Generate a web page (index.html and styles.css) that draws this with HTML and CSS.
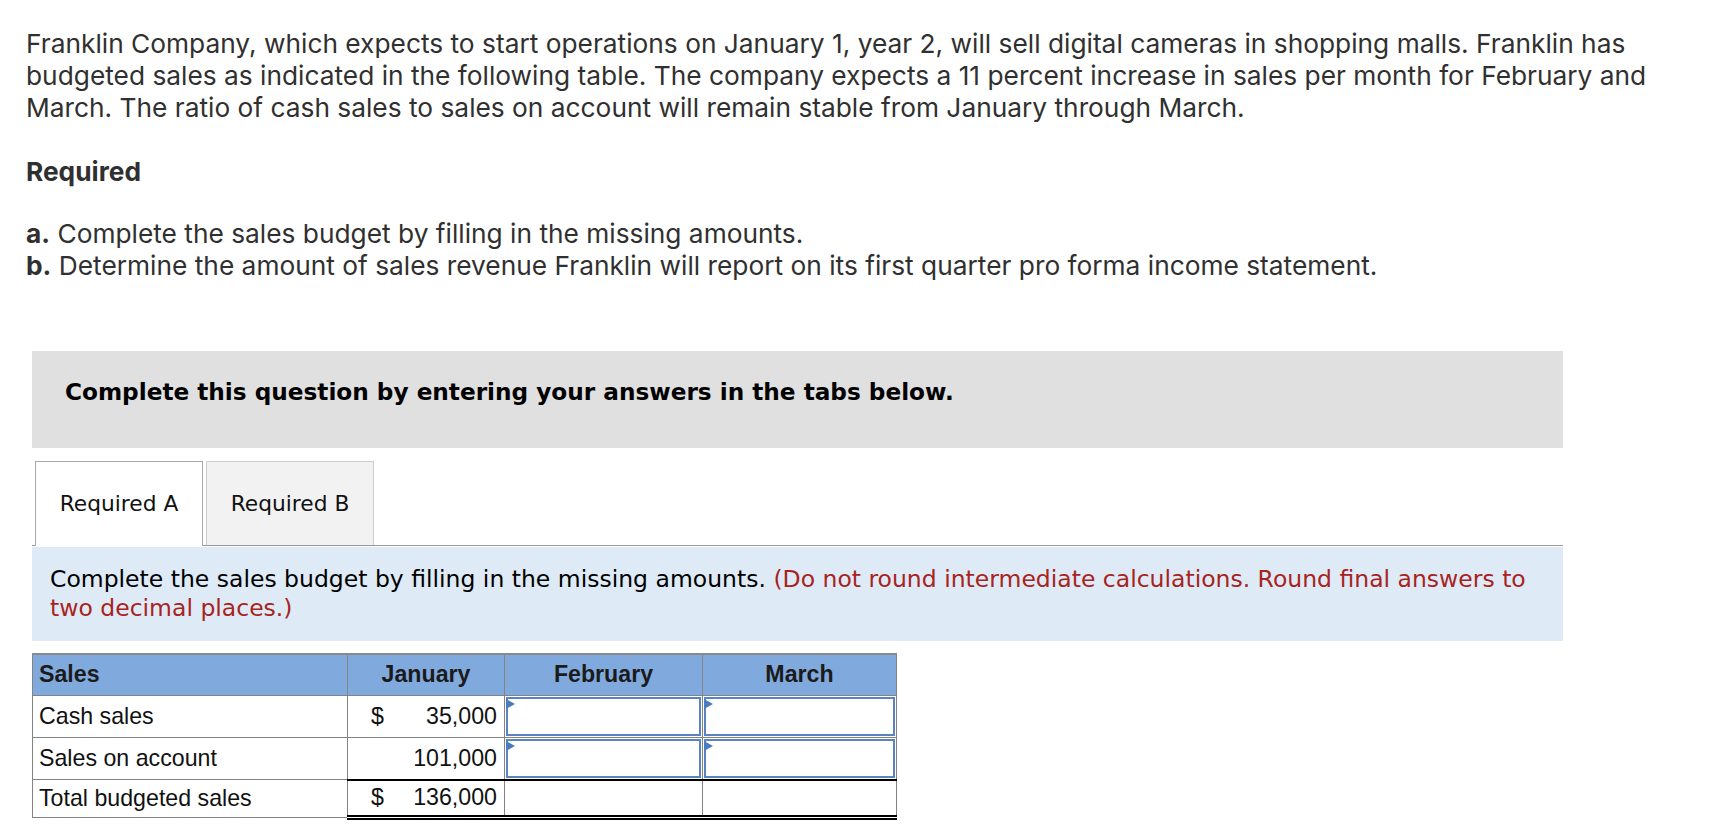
FILE: index.html
```html
<!DOCTYPE html>
<html lang="en">
<head>
<meta charset="utf-8">
<title>Franklin Company – Sales Budget</title>
<link rel="stylesheet" href="styles.css">
</head>
<body>
<div class="page">
  <p class="intro">Franklin Company, which expects to start operations on January 1, year 2, will sell digital cameras in shopping malls. Franklin has budgeted sales as indicated in the following table. The company expects a 11 percent increase in sales per month for February and March. The ratio of cash sales to sales on account will remain stable from January through March.</p>
  <p class="req-title">Required</p>
  <p class="req-list"><b>a.</b> Complete the sales budget by filling in the missing amounts.<br><b>b.</b> Determine the amount of sales revenue Franklin will report on its first quarter pro forma income statement.</p>

  <section class="question">
    <div class="banner">Complete this question by entering your answers in the tabs below.</div>
    <div class="tabs">
      <div class="tab tab-active">Required A</div>
      <div class="tab">Required B</div>
    </div>
    <div class="instructions"><span>Complete the sales budget by filling in the missing amounts.</span> <span class="warn">(Do not round intermediate calculations. Round final answers to two decimal places.)</span></div>

    <table class="budget">
      <colgroup>
        <col class="c-label"><col class="c-jan"><col class="c-feb"><col class="c-mar">
      </colgroup>
      <thead>
        <tr>
          <th class="h-label">Sales</th>
          <th>January</th>
          <th>February</th>
          <th>March</th>
        </tr>
      </thead>
      <tbody>
        <tr>
          <td class="label">Cash sales</td>
          <td class="amt"><span class="cur">$</span><span class="num">35,000</span></td>
          <td class="in"><div class="field"><span class="flag"></span></div></td>
          <td class="in"><div class="field"><span class="flag"></span></div></td>
        </tr>
        <tr>
          <td class="label">Sales on account</td>
          <td class="amt"><span class="cur"></span><span class="num">101,000</span></td>
          <td class="in"><div class="field"><span class="flag"></span></div></td>
          <td class="in"><div class="field"><span class="flag"></span></div></td>
        </tr>
        <tr class="total">
          <td class="label">Total budgeted sales</td>
          <td class="amt"><span class="cur">$</span><span class="num">136,000</span></td>
          <td></td>
          <td></td>
        </tr>
      </tbody>
    </table>
  </section>
</div>
</body>
</html>
```

FILE: styles.css
```css
html, body {
  margin: 0;
  padding: 0;
  background: #ffffff;
}

.page {
  padding: 28px 26px 20px 26px;
  width: 1728px;
  box-sizing: border-box;
}

.intro,
.req-title,
.req-list {
  font-family: "Inter", "Open Sans", sans-serif;
  font-size: 26.3px;
  line-height: 32px;
  color: #303030;
  margin: 0;
}

.req-title {
  font-weight: 700;
  margin-top: 32px;
}

.req-list {
  margin-top: 30px;
}

.req-list b {
  font-weight: 700;
}

.question {
  margin: 69px 0 0 6px;
  width: 1531px;
}

.banner {
  background: #e0e0e0;
  font-family: "DejaVu Sans", Verdana, sans-serif;
  font-weight: 700;
  font-size: 23.2px;
  color: #000;
  padding: 27px 20px 42px 33px;
  height: 97px;
  box-sizing: border-box;
}

.tabs {
  display: flex;
  align-items: flex-end;
  gap: 3px;
  margin-top: 13px;
  padding-left: 3px;
  height: 84px;
  border-bottom: 1px solid #9a9a9a;
}

.tab {
  width: 168px;
  height: 84px;
  box-sizing: border-box;
  display: flex;
  align-items: center;
  justify-content: center;
  padding-top: 0;
  font-family: "DejaVu Sans", Verdana, sans-serif;
  font-size: 21.75px;
  color: #111;
  background: #f2f2f2;
  border: 1px solid #cdcdcd;
  border-bottom: none;
}

.tab-active {
  background: #ffffff;
  border-color: #a8a8a8;
  height: 85px;
  margin-bottom: -1px;
  padding-bottom: 1px;
  position: relative;
}

.instructions {
  margin-top: 1px;
  background: #deebf7;
  padding: 18px;
  font-family: "DejaVu Sans", Verdana, sans-serif;
  font-size: 23.5px;
  line-height: 29px;
  color: #000;
}

.warn {
  color: #a8231d;
}

.budget {
  margin-top: 12px;
  border-collapse: collapse;
  width: 864px;
  table-layout: fixed;
  font-family: "Liberation Sans", Arial, Helvetica, sans-serif;
  font-size: 23.2px;
  color: #111;
}

.c-label { width: 315px; }
.c-jan { width: 157px; }
.c-feb { width: 198px; }
.c-mar { width: 194px; }

.budget th,
.budget td {
  border: 1px solid #838383;
  height: 41px;
  padding: 0;
  box-sizing: border-box;
}

.budget thead tr {
  border-top: 2px solid #8a8a8a;
}

.budget th {
  background: #80aade;
  font-weight: 700;
  color: #1b1b1b;
  text-align: center;
}

.budget th.h-label {
  text-align: left;
  padding-left: 6px;
}

.budget td.label {
  padding-left: 6px;
  text-align: left;
}

.budget td.amt {
  padding: 0 7px 0 23px;
}

.amt .cur,
.amt .num {
  display: inline-block;
}

.amt .num {
  float: right;
}

.budget td.in {
  padding: 1px;
}

.field {
  position: relative;
  height: 39px;
  box-sizing: border-box;
  border: 2px solid #5a83c2;
  background: #fff;
}

.flag {
  position: absolute;
  left: -2px;
  top: 0;
  width: 0;
  height: 0;
  border-top: 5px solid transparent;
  border-bottom: 5px solid transparent;
  border-left: 9px solid #4a7cc0;
}

.budget tr.total td {
  height: 38px;
}

.budget tr.total td:not(.label) {
  border-top: 2px solid #000;
  border-bottom: 5px double #000;
}
```
